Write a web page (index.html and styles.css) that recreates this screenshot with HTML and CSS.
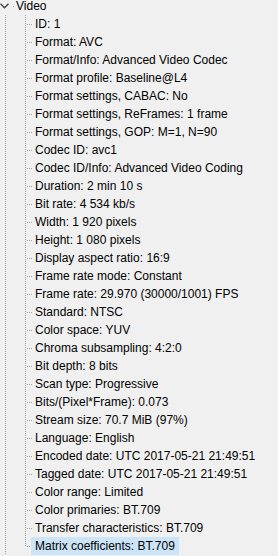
FILE: index.html
```html
<!DOCTYPE html>
<html lang="en">
<head>
  <meta charset="UTF-8">
  <meta name="viewport" content="width=device-width, initial-scale=1.0">
  <title>MediaInfo - Video</title>
  <link rel="stylesheet" href="styles.css">
</head>
<body>
  <ul class="tree">
    <li class="node">
      <div class="root-row">
        <svg class="chevron" width="9" height="6" viewBox="0 0 9 6"><path d="M0.5 0.8 L4.5 4.8 L8.5 0.8" fill="none" stroke="#404040" stroke-width="1.3"/></svg>
        <span class="label">Video</span>
      </div>
      <ul class="children">
        <li><span class="label">ID: 1</span></li>
        <li><span class="label">Format: AVC</span></li>
        <li><span class="label">Format/Info: Advanced Video Codec</span></li>
        <li><span class="label">Format profile: Baseline@L4</span></li>
        <li><span class="label">Format settings, CABAC: No</span></li>
        <li><span class="label">Format settings, ReFrames: 1 frame</span></li>
        <li><span class="label">Format settings, GOP: M=1, N=90</span></li>
        <li><span class="label">Codec ID: avc1</span></li>
        <li><span class="label">Codec ID/Info: Advanced Video Coding</span></li>
        <li><span class="label">Duration: 2 min 10 s</span></li>
        <li><span class="label">Bit rate: 4 534 kb/s</span></li>
        <li><span class="label">Width: 1 920 pixels</span></li>
        <li><span class="label">Height: 1 080 pixels</span></li>
        <li><span class="label">Display aspect ratio: 16:9</span></li>
        <li><span class="label">Frame rate mode: Constant</span></li>
        <li><span class="label">Frame rate: 29.970 (30000/1001) FPS</span></li>
        <li><span class="label">Standard: NTSC</span></li>
        <li><span class="label">Color space: YUV</span></li>
        <li><span class="label">Chroma subsampling: 4:2:0</span></li>
        <li><span class="label">Bit depth: 8 bits</span></li>
        <li><span class="label">Scan type: Progressive</span></li>
        <li><span class="label">Bits/(Pixel*Frame): 0.073</span></li>
        <li><span class="label">Stream size: 70.7 MiB (97%)</span></li>
        <li><span class="label">Language: English</span></li>
        <li><span class="label">Encoded date: UTC 2017-05-21 21:49:51</span></li>
        <li><span class="label">Tagged date: UTC 2017-05-21 21:49:51</span></li>
        <li><span class="label">Color range: Limited</span></li>
        <li><span class="label">Color primaries: BT.709</span></li>
        <li><span class="label">Transfer characteristics: BT.709</span></li>
        <li class="selected"><span class="label">Matrix coefficients: BT.709</span></li>
      </ul>
    </li>
  </ul>
</body>
</html>
```

FILE: styles.css
```css
:root {
  --bg: #f0f0f0;
  --dots: #a0a0a0;
  --text: #000;
  --selected: #cce4f7;
}
body {
  margin: 0;
  font-family: "Liberation Sans", Arial, sans-serif;
  font-size: 12px;
  background-color: var(--bg);
  color: var(--text);
  overflow: hidden;
}
.tree { list-style: none; margin: -3px 0 0; padding: 0; }
.node { margin: 0; padding: 0; }
.root-row {
  display: flex;
  align-items: center;
  height: 18px;
  padding-left: 0;
  /* single dot between chevron and label */
  background: linear-gradient(var(--dots), var(--dots)) 13px 9px / 1px 1px no-repeat;
}
.chevron { display: block; margin-left: 0; margin-top: 0; }
.root-row .label { margin-left: 4px; padding: 0 3px; line-height: 18px; }
.children {
  list-style: none;
  margin: 0;
  padding: 0;
  background: repeating-linear-gradient(to bottom, var(--dots) 0 1px, transparent 1px 2px) 5px 0 / 1px 2000px no-repeat;
}
.children li {
  height: 18px;
  line-height: 18px;
  padding-left: 31px;
  white-space: nowrap;
  background:
    repeating-linear-gradient(to right, var(--dots) 0 1px, transparent 1px 2px) 27px 9px / 5px 1px no-repeat,
    repeating-linear-gradient(to bottom, var(--dots) 0 1px, transparent 1px 2px) 25px 0 / 1px 18px no-repeat;
}
.children li:last-child {
  background:
    repeating-linear-gradient(to right, var(--dots) 0 1px, transparent 1px 2px) 27px 9px / 5px 1px no-repeat,
    repeating-linear-gradient(to bottom, var(--dots) 0 1px, transparent 1px 2px) 25px 0 / 1px 10px no-repeat;
}
.label { display: inline-block; padding: 0 4px; height: 18px; }
.selected .label { background-color: var(--selected); }
```
